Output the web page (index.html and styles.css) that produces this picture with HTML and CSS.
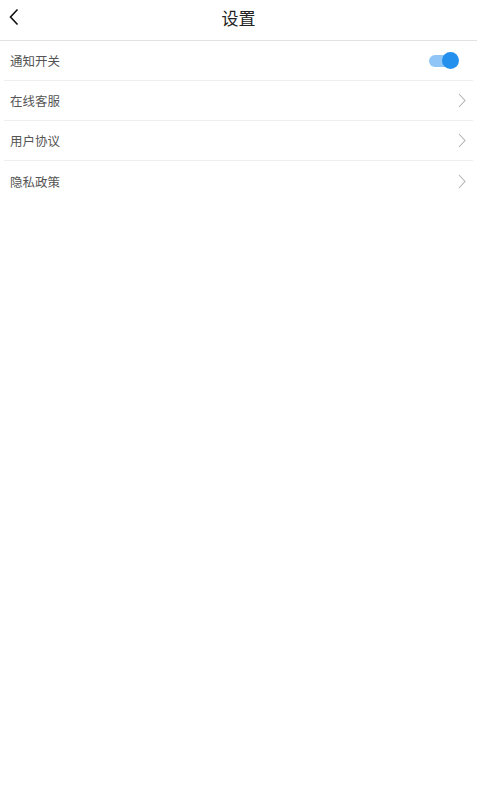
FILE: index.html
```html
<!DOCTYPE html>
<html lang="zh">
<head>
<meta charset="utf-8">
<title>设置</title>
<link rel="stylesheet" href="styles.css">
</head>
<body>
<header class="topbar">
  <span class="back">
    <svg width="12" height="20" viewBox="0 0 12 20"><path d="M9.5 2.5 L2.5 10 L9.5 17.5" fill="none" stroke="#111" stroke-width="1.6"/></svg>
  </span>
  <h1 class="title">设置</h1>
</header>
<ul class="list">
  <li class="row"><span class="label">通知开关</span>
    <span class="switch"><span class="track"></span><span class="knob"></span></span>
  </li>
  <li class="row"><span class="label">在线客服</span>
    <svg class="chev" width="8" height="15" viewBox="0 0 8 15"><path d="M1 1 L7 7.5 L1 14" fill="none" stroke="#b3b3b3" stroke-width="1.1"/></svg>
  </li>
  <li class="row"><span class="label">用户协议</span>
    <svg class="chev" width="8" height="15" viewBox="0 0 8 15"><path d="M1 1 L7 7.5 L1 14" fill="none" stroke="#b3b3b3" stroke-width="1.1"/></svg>
  </li>
  <li class="row"><span class="label">隐私政策</span>
    <svg class="chev" width="8" height="15" viewBox="0 0 8 15"><path d="M1 1 L7 7.5 L1 14" fill="none" stroke="#b3b3b3" stroke-width="1.1"/></svg>
  </li>
</ul>
</body>
</html>
```
FILE: styles.css
```css
html, body {
  margin: 0;
  padding: 0;
  background: #fff;
  font-family: "Noto Sans CJK SC", "Noto Sans", sans-serif;
}
.topbar {
  border-bottom: 1px solid #e2e2e2;
  display: flex;
  align-items: center;
  justify-content: center;
  position: relative;
  box-sizing: border-box;
  height: 41px;
}
.back {
  position: absolute;
  left: 8px;
  top: 7px;
  display: flex;
}
.title {
  margin: 0;
  font-size: 17px;
  font-weight: normal;
  color: #222;
  line-height: 1;
  margin-top: -6px;
}
.list {
  list-style: none;
  margin: 0;
  padding: 0 4px;
}
.row {
  height: 40px;
  box-sizing: border-box;
  display: flex;
  align-items: center;
  justify-content: space-between;
  padding: 0 10px 0 6px;
  border-bottom: 1px solid #efefef;
}
.row:last-child {
  border-bottom: none;
}
.label {
  font-size: 12.5px;
  color: #555;
}
.switch {
  position: relative;
  width: 30px;
  height: 17px;
  margin-right: 4px;
}
.track {
  position: absolute;
  left: 0;
  top: 2.5px;
  width: 24px;
  height: 12px;
  border-radius: 6px;
  background: #8fc6f7;
}
.knob {
  position: absolute;
  right: 0;
  top: 0;
  width: 17px;
  height: 17px;
  border-radius: 50%;
  background: #2490ee;
}
.chev {
  display: block;
  margin-right: -3px;
}
```
